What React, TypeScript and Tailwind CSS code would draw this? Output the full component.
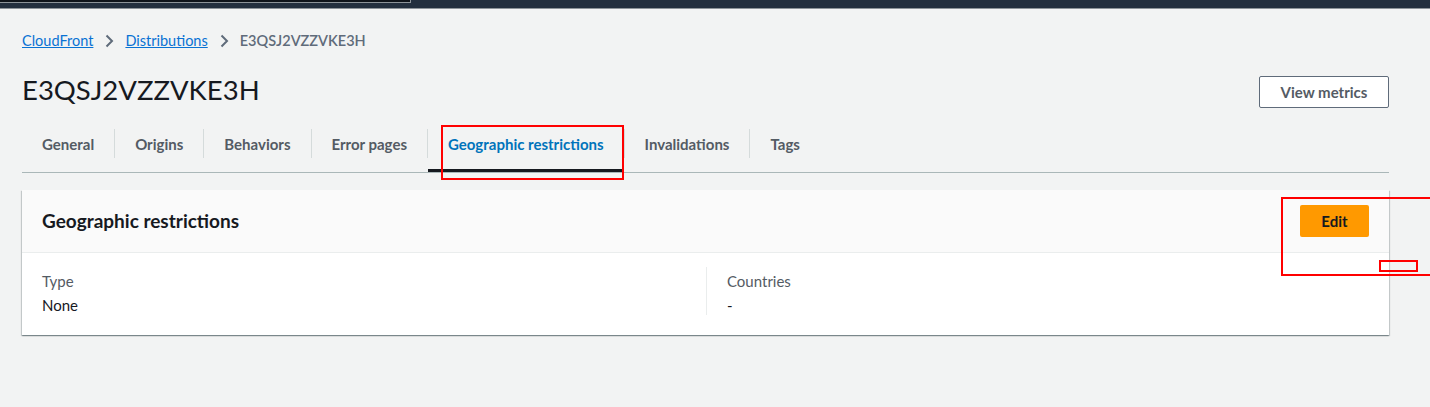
import React from "react";

const font = { fontFamily: 'Lato, "Open Sans", Arial, sans-serif' };

function Chevron() {
  return (
    <svg width="16" height="16" viewBox="0 0 16 16" className="mx-[8px]">
      <path d="M5.5 2.5 L11 8 L5.5 13.5" fill="none" stroke="#5f6b7a" strokeWidth="2" />
    </svg>
  );
}

const tabs = ["General", "Origins", "Behaviors", "Error pages", "Geographic restrictions", "Invalidations", "Tags"];

export default function App() {
  return (
    <div className="w-[1430px] h-[407px] bg-[#f2f3f3] relative overflow-hidden" style={font}>
      {/* top bar */}
      <div className="h-[9px] bg-[#232f3e] border-b border-[#8d9499] flex">
        <div className="w-[411px] h-[3px] bg-[#0f141a] border-b border-r border-[#8d9499]" />
      </div>

      <div className="pl-[22px] pr-[41px]">
        {/* breadcrumb */}
        <div className="flex items-center h-[20px] mt-[22px] text-[14.5px]">
          <a className="text-[#0972d3] underline">CloudFront</a>
          <Chevron />
          <a className="text-[#0972d3] underline">Distributions</a>
          <Chevron />
          <span className="text-[#5f6b7a] font-semibold">E3QSJ2VZZVKE3H</span>
        </div>

        {/* header */}
        <div className="flex items-start justify-between mt-[19px] h-[40px]">
          <h1 className="text-[27.5px] leading-[40px] text-[#16191f] font-normal">E3QSJ2VZZVKE3H</h1>
          <button className="mt-[6px] w-[130px] h-[32px] border border-[#5f6b7a] rounded-[2px] bg-white text-[#545b64] text-[15px] font-bold">
            View metrics
          </button>
        </div>

        {/* tabs */}
        <div className="flex mt-[18px] border-b border-[#aab7b8] h-[45px]">
          {tabs.map((t, i) => (
            <React.Fragment key={t}>
              {i > 0 && <div className="w-px h-[29px] mt-[1px] bg-[#d5dbdb]" />}
              <div
                className={
                  "px-[20px] pt-[6px] text-[15px] leading-[20px] font-bold h-[44px] " +
                  (t === "Geographic restrictions"
                    ? "text-[#0073bb] border-b-[3px] border-[#16191f]"
                    : "text-[#545b64]")
                }
              >
                {t}
              </div>
            </React.Fragment>
          ))}
        </div>

        {/* card */}
        <div className="mt-[17px] bg-white shadow-[0_1px_1px_0_rgba(0,28,36,0.3),1px_1px_1px_0_rgba(0,28,36,0.15),-1px_1px_1px_0_rgba(0,28,36,0.15)]">
          <div className="h-[63px] bg-[#fafafa] border-b border-[#eaeded] flex items-center justify-between pl-[20px] pr-[20px]">
            <h2 className="text-[19px] font-bold text-[#16191f]">Geographic restrictions</h2>
            <button className="w-[69px] h-[32px] bg-[#ff9900] rounded-[2px] text-[15px] font-bold text-[#16191f]">Edit</button>
          </div>
          <div className="flex pt-[14px] pb-[18px]">
            <div className="w-[684px] pl-[20px] pt-[2px]">
              <div className="text-[15px] text-[#545b64] leading-[24px]">Type</div>
              <div className="text-[15px] text-[#16191f] leading-[24px]">None</div>
            </div>
            <div className="w-px h-[48px] bg-[#eaeded]" />
            <div className="pl-[20px] pt-[2px]">
              <div className="text-[15px] text-[#545b64] leading-[24px]">Countries</div>
              <div className="text-[15px] text-[#16191f] leading-[24px]">-</div>
            </div>
          </div>
        </div>
      </div>

      {/* annotations */}
      <div className="absolute left-[441px] top-[125px] w-[183px] h-[55px] border-2 border-[#ff0000]" />
      <div className="absolute left-[1281px] top-[197px] w-[152px] h-[79px] border-2 border-[#ff0000]" />
      <div className="absolute left-[1379px] top-[260px] w-[39px] h-[12px] border-2 border-[#ff0000]" />
    </div>
  );
}
